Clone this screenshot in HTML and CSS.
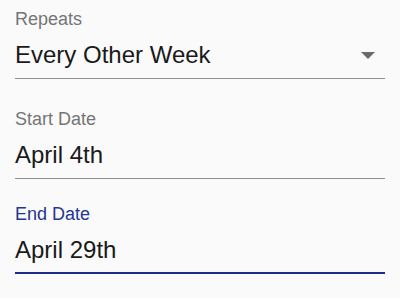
FILE: index.html
```html
<!DOCTYPE html>
<html>
<head>
<meta charset="utf-8">
<link rel="stylesheet" href="styles.css">
</head>
<body>
<div class="form">
  <div class="field field-select">
    <div class="label">Repeats</div>
    <div class="value">
      <span>Every Other Week</span>
      <svg class="arrow" width="14" height="7" viewBox="0 0 14 7"><path d="M0 0h14L7 7z" fill="#6b6b6b"/></svg>
    </div>
  </div>
  <div class="field">
    <div class="label">Start Date</div>
    <div class="value"><span>April 4th</span></div>
  </div>
  <div class="field field-focused">
    <div class="label">End Date</div>
    <div class="value"><span>April 29th</span></div>
  </div>
</div>
</body>
</html>
```
FILE: styles.css
```css
html, body {
  margin: 0;
  padding: 0;
  background: #fafafa;
}
body {
  font-family: "Liberation Sans", Arial, sans-serif;
}
.form {
  display: flex;
  flex-direction: column;
  padding: 9px 15px 0 15px;
}
.field + .field {
  margin-top: 25px;
}
.field-select {
  margin-bottom: 5px;
}
.label {
  font-size: 18px;
  line-height: 20px;
  color: #757575;
}
.value {
  margin-top: 11px;
  font-size: 24px;
  line-height: 30px;
  color: #1a1a1a;
  padding-bottom: 8px;
  border-bottom: 1px solid #8f8f8f;
  display: flex;
  align-items: center;
  justify-content: space-between;
}
.arrow {
  margin-right: 10px;
  display: block;
}
.field-focused .label {
  color: #253592;
}
.field-focused .value {
  padding-bottom: 7px;
  border-bottom: 2px solid #1f2d86;
}
```
